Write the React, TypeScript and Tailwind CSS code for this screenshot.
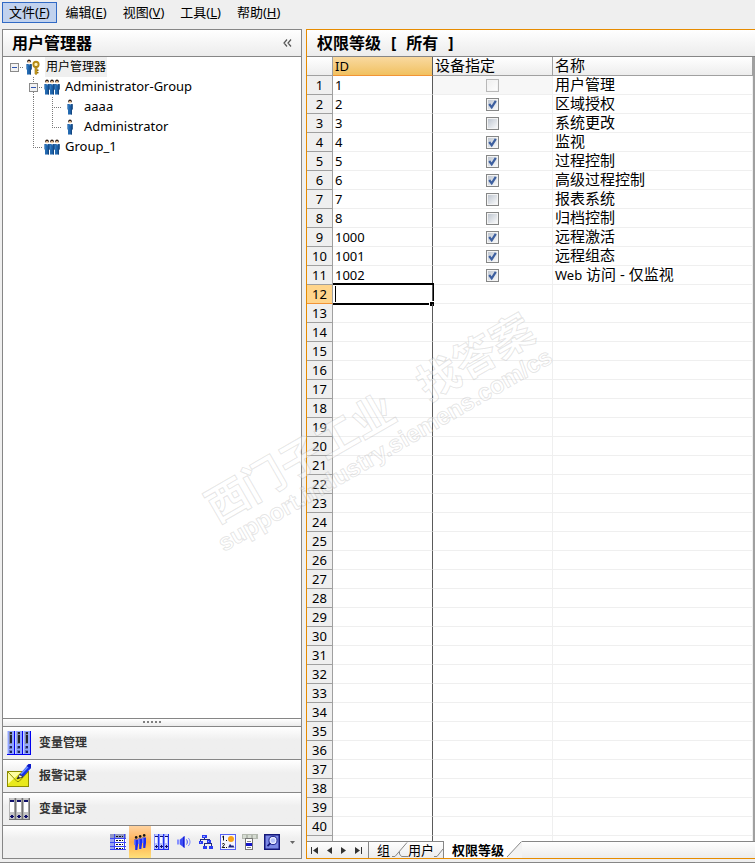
import React, { useState } from 'react';

type GuideKind = 'expander' | 'line' | 'tee' | 'elbow' | 'blank';
type TreeIconKind = 'root' | 'group' | 'user';

interface TreeRow {
  label: string;
  icon: TreeIconKind;
  guides: GuideKind[];
  cjk?: boolean;
}

interface Level {
  id: string;
  device: boolean;
  name: string;
  disabled?: boolean;
}

const menus = [
  { label: '文件', key: 'F' },
  { label: '编辑', key: 'E' },
  { label: '视图', key: 'V' },
  { label: '工具', key: 'L' },
  { label: '帮助', key: 'H' },
];

const treeRows: TreeRow[] = [
  { label: '用户管理器', icon: 'root', guides: ['expander'], cjk: true },
  { label: 'Administrator-Group', icon: 'group', guides: ['blank', 'expander'] },
  { label: 'aaaa', icon: 'user', guides: ['blank', 'line', 'tee'] },
  { label: 'Administrator', icon: 'user', guides: ['blank', 'line', 'elbow'] },
  { label: 'Group_1', icon: 'group', guides: ['blank', 'elbow'] },
];

const initialLevels: Level[] = [
  { id: '1', device: false, name: '用户管理', disabled: true },
  { id: '2', device: true, name: '区域授权' },
  { id: '3', device: false, name: '系统更改' },
  { id: '4', device: true, name: '监视' },
  { id: '5', device: true, name: '过程控制' },
  { id: '6', device: true, name: '高级过程控制' },
  { id: '7', device: false, name: '报表系统' },
  { id: '8', device: false, name: '归档控制' },
  { id: '1000', device: true, name: '远程激活' },
  { id: '1001', device: true, name: '远程组态' },
  { id: '1002', device: true, name: 'Web 访问 - 仅监视' },
];

const ROW_COUNT = 41;

/* ---------- tree ---------- */

const Guide: React.FC<{ kind: GuideKind; nested: boolean }> = ({ kind, nested }) => (
  <svg width="19" height="20" viewBox="0 0 19 20" shapeRendering="crispEdges" className="shrink-0">
    <g stroke="#7a7a7a" strokeDasharray="1 1" fill="none">
      {kind === 'line' && <path d="M9.5 0V20" />}
      {kind === 'tee' && <path d="M9.5 0V20M9 10.5H19" />}
      {kind === 'elbow' && <path d="M9.5 0V10M9 10.5H19" />}
      {kind === 'expander' && <path d={nested ? 'M9.5 0V6M9.5 15V20M15 10.5H19' : 'M15 10.5H19'} />}
    </g>
    {kind === 'expander' && (
      <g>
        <rect x="5.5" y="6.5" width="8" height="8" fill="#f2f2f2" stroke="#8a8a8a" />
        <path d="M7 10.5H12" stroke="#2f55b0" />
      </g>
    )}
  </svg>
);

const Person: React.FC<{ x: number }> = ({ x }) => (
  <g transform={`translate(${x} 0)`}>
    <circle cx="3" cy="2.2" r="1.8" fill="#2a1a12" />
    <path d="M1.8 2.2H4.2V4.2H1.8Z" fill="#f5cfa8" />
    <path d="M.4 5H5.6V10.5H5V15.6H1V10.5H.4Z" fill="#1b5da3" />
    <path d="M1 5.4H2.4V15H1.4V10H1Z" fill="#2f78bf" />
    <path d="M4.6 5.2H5.6V10.5H5V15.6H4.2Z" fill="#123f73" />
    <path d="M2.4 4.2H3.8L3.1 6.4Z" fill="#fff" />
  </g>
);

const TreeIcon: React.FC<{ kind: TreeIconKind }> = ({ kind }) => (
  <svg width="18" height="16" viewBox="0 0 18 16" className="shrink-0">
    {kind === 'group' && (
      <>
        <Person x={1} />
        <Person x={6} />
        <Person x={11} />
      </>
    )}
    {kind === 'user' && <Person x={5} />}
    {kind === 'root' && (
      <>
        <Person x={2} />
        <circle cx="12" cy="5.4" r="2.6" fill="#fff3bd" stroke="#b58a14" strokeWidth="1.9" />
        <path d="M11 8H13V14.6L12 15.8L11 14.6Z" fill="#d3a824" stroke="#8d6a0c" strokeWidth=".6" />
        <path d="M13 10.5H14.5V12H13ZM13 13H14.5V14.2H13Z" fill="#8d6a0c" />
      </>
    )}
  </svg>
);

const TreeView: React.FC = () => (
  <ul role="tree" className="flex-1 min-h-0 overflow-hidden bg-white pl-0.5">
    {treeRows.map((row) => (
      <li key={row.label} role="treeitem" className="flex h-5 items-center">
        {row.guides.map((kind, i) =>
          kind === 'blank' ? (
            <span key={i} className="w-[19px]" />
          ) : (
            <Guide key={i} kind={kind} nested={i > 0} />
          )
        )}
        <TreeIcon kind={row.icon} />
        <span
          className={
            row.cjk
              ? 'ml-[3px] h-5 bg-[#efefef] px-px text-[12px] leading-5'
              : 'ml-1 pb-0.5 text-[13px] leading-[18px]'
          }
        >
          {row.label}
        </span>
      </li>
    ))}
  </ul>
);

/* ---------- navigation bars ---------- */

const TagsIcon: React.FC = () => (
  <svg width="24" height="24" viewBox="0 0 24 24" shapeRendering="crispEdges">
    <rect width="24" height="24" fill="#92a6ff" />
    {[0, 8, 16].map((x) => (
      <g key={x} transform={`translate(${x} 0)`}>
        <path d="M0 0H1V23H0Z" fill="#c5d0ff" />
        <path d="M7 0H8V24H7Z" fill="#0000f0" />
        <path d="M2 1H5V13H2Z" fill="#8288a4" />
        <path d="M3 1H5V3H3ZM3 4H5V12H3Z" fill="#22252c" />
        <path d="M2 15H5V18H2ZM2 19H5V22H2Z" fill="#6672b8" />
        <path d="M3 15H5V17H3ZM3 20H5V22H3Z" fill="#1d245c" />
      </g>
    ))}
    <path d="M0 23H24V24H0Z" fill="#0000f0" />
  </svg>
);

const AlarmIcon: React.FC = () => (
  <svg width="24" height="24" viewBox="0 0 24 24">
    <rect x=".5" y="7.5" width="21" height="15" fill="#e9e91c" stroke="#8c8c00" />
    <path d="M1 8H14L1 20Z" fill="#ffffa0" />
    <path d="M1 8L10 17.5H12L21 8" fill="none" stroke="#8c8c00" />
    <path d="M12.5 10.5L20 2L24 4L16 13Z" fill="#1630e8" />
    <path d="M14 10L21 2.8" stroke="#6f96ff" strokeWidth="1.5" />
    <path d="M19.5 2L21.5 0H24V3.5L23.5 4.5Z" fill="#0a18c8" />
    <path d="M12.5 10.5L16 13L10 14.8Z" fill="#f1f1f1" stroke="#222" strokeWidth=".8" />
    <path d="M10 14.8L12 12.6L12.8 14Z" fill="#111" />
  </svg>
);

const BindersIcon: React.FC = () => (
  <svg width="24" height="24" viewBox="0 0 24 24" shapeRendering="crispEdges">
    {[2, 9, 16].map((x) => (
      <g key={x} transform={`translate(${x} 0)`}>
        <path d="M0 1H7V23H0Z" fill="#c6c6c6" />
        <path d="M1 5H5V15H1Z" fill="#fff" />
        <path d="M0 1H1V23H0Z" fill="#b4b4b4" />
        <path d="M5 1H6V23H5Z" fill="#a2a2a2" />
        <path d="M6 1H7V23H6ZM0 22H7V23H0Z" fill="#747474" />
        <path d="M1 3H5V5H1Z" fill="#10106a" />
        <path d="M2 18H4V21H2ZM1 19H5V20H1Z" fill="#10106a" />
      </g>
    ))}
  </svg>
);

const navItems = [
  { label: '变量管理', icon: <TagsIcon /> },
  { label: '报警记录', icon: <AlarmIcon /> },
  { label: '变量记录', icon: <BindersIcon /> },
];

const TableIcon: React.FC = () => (
  <svg width="16" height="16" viewBox="0 0 16 16" shapeRendering="crispEdges">
    <path d="M0 0H16V4H0Z" fill="#9298c4" />
    <path d="M0 4H5V16H0Z" fill="#9aa5f0" />
    <path d="M5 4H16V16H5Z" fill="#fff" />
    <path d="M0 4.5H16M0 8.5H16M0 12.5H16M0 15.5H16M4.5 0V16M14.5 0V16" stroke="#3a46f5" fill="none" />
    <path d="M6 2.5H13M6 6.5H13M6 10.5H13M6 14.5H13" stroke="#111" strokeDasharray="2 1" />
  </svg>
);

const CrowdIcon: React.FC = () => (
  <svg width="16" height="18" viewBox="0 0 16 18">
    {[
      [2, 3],
      [6, 2],
      [10, 1],
    ].map(([x, y]) => (
      <g key={x} transform={`translate(${x} ${y})`}>
        <circle cx="2.2" cy="1.4" r="1.3" fill="#151515" />
        <path d="M.2 3.6H4V9L3.3 14H1.2V9H.2Z" fill="#1c2cf5" />
        <path d="M.4 4H1.4V9H.4Z" fill="#8d9cff" />
      </g>
    ))}
  </svg>
);

const SmallBindersIcon: React.FC = () => (
  <svg width="16" height="16" viewBox="0 0 16 16" shapeRendering="crispEdges">
    {[0, 5, 10].map((x) => (
      <g key={x} transform={`translate(${x} 0)`}>
        <path d="M0 0H5V15H0Z" fill="#b9c2ff" />
        <path d="M1 3H3V9H1Z" fill="#f4f6ff" />
        <path d="M0 0H1V15H0Z" fill="#8490ff" />
        <path d="M4 0H5V16H4ZM0 15H5V16H0Z" fill="#2030f0" />
        <path d="M1 2H4V3H1ZM2 11H3V14H2ZM1 12H4V13H1Z" fill="#10106a" />
      </g>
    ))}
  </svg>
);

const SpeakerIcon: React.FC = () => (
  <svg width="16" height="16" viewBox="0 0 16 16" fill="none">
    <path d="M1 5.5H3.5V10.5H1Z" fill="#8791ff" />
    <path d="M4 5.5L8.5 2V14L4 10.5Z" fill="#3f4ff5" />
    <path d="M7 3.2L8.5 2V14L7 12.8Z" fill="#1822d8" />
    <path d="M10.5 5.5C11.6 7 11.6 9 10.5 10.5" stroke="#3b4cf5" />
    <path d="M12.2 4C14.6 6.2 14.6 9.8 12.2 12" stroke="#7a88ff" />
  </svg>
);

const StructureIcon: React.FC = () => (
  <svg width="16" height="16" viewBox="0 0 16 16" shapeRendering="crispEdges">
    <path d="M6.5 3V6M2.5 8V5.5H11.5V8M6.5 12V9.5H13.5V12" stroke="#222a7a" fill="none" />
    <path d="M4 1H9V4H4ZM1 7H5V10H1ZM9 6H13V9H9ZM5 12H9V15H5ZM11 12H15V15H11Z" fill="#2a3bf2" />
    <path d="M5 2H7V3H5ZM2 8H3V9H2ZM10 7H11V8H10Z" fill="#9aa8ff" />
  </svg>
);

const TextLibraryIcon: React.FC = () => (
  <svg width="16" height="16" viewBox="0 0 16 16">
    <rect x=".5" y=".5" width="15" height="15" fill="#f4f5ff" stroke="#5563f5" />
    <path d="M3.5 2V6.5M2.2 3.2L3.5 2M2.2 10Q4.5 8.6 4.5 10.5L2.2 13.5H5" stroke="#111" fill="none" />
    <path d="M6 6H7V7H6ZM6 13H7V14H6Z" fill="#111" />
    <circle cx="11" cy="5" r="3" fill="#f6a21a" />
    <path d="M8 13.5L10 10L12 12L13 11L14.5 13.5Z" fill="#1b2380" />
  </svg>
);

const ReportIcon: React.FC = () => (
  <svg width="16" height="16" viewBox="0 0 16 16" shapeRendering="crispEdges">
    <path d="M0 0H16V5H0Z" fill="#b4bab0" />
    <path d="M1 1H4V4H1ZM6 1H9V4H6ZM11 1H14V4H11Z" fill="#d6dcd2" />
    <path d="M3.5 4.5H10.5V15.5H3.5Z" fill="#fff" stroke="#777" />
    <path d="M5 7.5H9M5 13.5H9" stroke="#888" />
    <path d="M4 9H10V12H4Z" fill="#1414c8" />
  </svg>
);

const PictureIcon: React.FC = () => (
  <svg width="16" height="16" viewBox="0 0 16 16">
    <rect x=".75" y=".75" width="14.5" height="14.5" fill="#7c89e6" stroke="#14187a" strokeWidth="1.5" />
    <circle cx="9" cy="6.5" r="3" fill="#b8c4fa" stroke="#e8ecff" strokeWidth="1.3" />
    <circle cx="9" cy="6.5" r="4.1" fill="none" stroke="#1a1f86" strokeWidth=".9" />
    <path d="M6.4 9.2L3.5 12.2" stroke="#14187a" strokeWidth="1.7" />
  </svg>
);

const tools = [
  { label: '变量管理', icon: <TableIcon /> },
  { label: '用户管理器', icon: <CrowdIcon />, active: true },
  { label: '变量记录', icon: <SmallBindersIcon /> },
  { label: '报警', icon: <SpeakerIcon /> },
  { label: '结构', icon: <StructureIcon /> },
  { label: '文本库', icon: <TextLibraryIcon /> },
  { label: '报表', icon: <ReportIcon /> },
  { label: '画面', icon: <PictureIcon /> },
];

const Sidebar: React.FC = () => (
  <aside className="flex w-[300px] shrink-0 flex-col border border-[#868686]">
    <header className="flex h-[27px] shrink-0 items-center justify-between border-b border-[#868686] bg-gradient-to-b from-white to-[#ececec] pr-2 pl-[9px]">
      <h2 className="text-[16px] leading-5 font-bold">用户管理器</h2>
      <button aria-label="折叠" className="p-px">
        <svg width="9" height="8" viewBox="0 0 9 8" fill="none" stroke="#555" strokeWidth="1.2">
          <path d="M4 .5L1 4L4 7.5M8 .5L5 4L8 7.5" />
        </svg>
      </button>
    </header>

    <TreeView />

    <div className="flex h-[9px] shrink-0 items-start justify-center gap-0.5 border-y border-[#868686] bg-gradient-to-b from-white to-[#ececec] pt-0.5">
      {[0, 1, 2, 3, 4].map((i) => (
        <span key={i} className="size-0.5 bg-[#808080]" />
      ))}
    </div>

    <nav className="shrink-0">
      {navItems.map((item) => (
        <button
          key={item.label}
          className="flex h-[33px] w-full items-center gap-2 border-b border-[#868686] bg-gradient-to-b from-white via-[#efefef] via-40% to-[#efefef] pl-1 text-[12px] font-bold text-[#333]"
        >
          {item.icon}
          <span>{item.label}</span>
        </button>
      ))}
    </nav>

    <div className="flex h-8 shrink-0 justify-end bg-gradient-to-b from-white via-[#efefef] via-40% to-[#efefef]">
      {tools.map((tool) => (
        <button
          key={tool.label}
          aria-label={tool.label}
          className={`flex w-[22px] items-center justify-center ${
            tool.active ? 'bg-gradient-to-b from-[#ffd3a0] via-[#ffad4a] via-50% to-[#ffe07a]' : ''
          }`}
        >
          {tool.icon}
        </button>
      ))}
      <button aria-label="更多" className="flex w-[18px] items-center justify-center">
        <svg width="5" height="3" viewBox="0 0 5 3">
          <path d="M0 0H5L2.5 3Z" fill="#666" />
        </svg>
      </button>
    </div>
  </aside>
);

/* ---------- grid ---------- */

const Check: React.FC<{ row: Level; onChange: () => void }> = ({ row, onChange }) => (
  <span className="relative mx-auto block size-[13px]">
    <input
      type="checkbox"
      aria-label={`设备指定 ${row.id}`}
      checked={row.device}
      disabled={row.disabled}
      onChange={onChange}
      className="peer block size-[13px] appearance-none border border-[#868787] bg-gradient-to-br from-[#b9c1cc] to-white shadow-[inset_0_0_0_1px_#f4f4f4] disabled:border-[#b8b8b8] disabled:from-[#eee]"
    />
    <svg
      width="13"
      height="13"
      viewBox="0 0 13 13"
      fill="none"
      className="pointer-events-none absolute inset-0 opacity-0 peer-checked:opacity-100"
    >
      <path d="M3.2 6L5.7 9.4L9.8 2.8" stroke="#3d5f9f" strokeWidth="2.2" />
    </svg>
  </span>
);

const SelectedCell: React.FC = () => (
  <>
    <input
      type="text"
      aria-label="ID 12"
      className="block h-[18px] w-full bg-transparent pl-0.5 text-[13px] outline-none"
    />
    <span className="pointer-events-none absolute -top-0.5 -right-0.5 -bottom-0.5 left-0 border-y-2 border-r border-black">
      <span className="absolute top-px left-0.5 h-4 w-px bg-black" />
      <span className="absolute -right-px -bottom-[3px] size-[5px] border-t border-l border-white bg-black" />
    </span>
  </>
);

const LevelGrid: React.FC = () => {
  const [levels, setLevels] = useState(initialLevels);
  const selected = 12;

  const toggle = (index: number) => {
    setLevels((prev) => prev.map((l, i) => (i === index ? { ...l, device: !l.device } : l)));
  };

  return (
    <div className="flex min-h-0 flex-1 bg-white">
      <div className="min-w-0 flex-1">
        <table className="w-full table-fixed border-separate border-spacing-0 text-[13px] leading-[18px]">
          <colgroup>
            <col className="w-[26px]" />
            <col className="w-[100px]" />
            <col className="w-[120px]" />
            <col />
          </colgroup>
          <thead>
            <tr className="h-[19px] bg-gradient-to-b from-white to-[#ececec] text-left">
              <th className="border-r border-b border-[#a0a0a0] p-0" />
              <th className="border-r border-b border-r-[#5a5a5a] border-b-[#f29436] bg-gradient-to-b from-[#f9d99f] to-[#f1c15f] p-0 pl-0.5 font-normal">
                ID
              </th>
              <th className="border-r border-b border-[#a0a0a0] p-0 pb-0.5 pl-0.5 text-[15px] leading-4 font-normal">
                设备指定
              </th>
              <th className="border-r border-b border-[#a0a0a0] p-0 pb-0.5 pl-0.5 text-[15px] leading-4 font-normal">
                名称
              </th>
            </tr>
          </thead>
          <tbody>
            {Array.from({ length: ROW_COUNT }, (_, i) => {
              const row = levels[i];
              const isSelected = i + 1 === selected;
              return (
                <tr key={i} className="h-[19px]">
                  <th
                    className={`border-r border-b p-0 text-center font-normal ${
                      isSelected
                        ? 'border-r-[#a0a0a0] border-b-[#f29436] bg-[#ffd58c]'
                        : 'border-[#a0a0a0] bg-[#efefef]'
                    }`}
                  >
                    {i < 40 ? i + 1 : ''}
                  </th>
                  <td className="relative border-r border-b border-r-[#5a5a5a] border-b-[#efefef] p-0">
                    {isSelected ? <SelectedCell /> : <span className="block pl-0.5">{row?.id}</span>}
                  </td>
                  <td className={`border-r border-b border-[#efefef] p-0 ${row?.disabled ? 'bg-[#f7f7f7]' : ''}`}>
                    {row && <Check row={row} onChange={() => toggle(i)} />}
                  </td>
                  <td className="border-r border-b border-[#efefef] p-0 pb-0.5 pl-0.5 text-[15px] leading-4">
                    {row &&
                      (row.name.startsWith('Web') ? (
                        <>
                          <span className="text-[13px] leading-none">Web</span>
                          {row.name.slice(3)}
                        </>
                      ) : (
                        row.name
                      ))}
                  </td>
                </tr>
              );
            })}
          </tbody>
        </table>
      </div>
      <div className="w-0.5 shrink-0 bg-[#a0a0a0]" />
    </div>
  );
};

/* Sits above the grid so that the last, partly visible row runs under it */
const SheetTabs: React.FC = () => (
  <footer className="relative z-10 flex h-[17px] shrink-0 bg-gradient-to-b from-white to-[#ececec] text-[13px] leading-4">
    <div className="flex w-[62px] items-center justify-around border-t border-r border-[#868686] pr-0.5">
      {[
        { label: '第一个', d: 'M0 0H1V7H0ZM7 0V7L2 3.5Z' },
        { label: '上一个', d: 'M6 0V7L1 3.5Z' },
        { label: '下一个', d: 'M1 0V7L6 3.5Z' },
        { label: '最后一个', d: 'M0 0V7L5 3.5ZM6 0H7V7H6Z' },
      ].map((b) => (
        <button key={b.label} aria-label={b.label}>
          <svg width="7" height="7" viewBox="0 0 7 7" fill="#333">
            <path d={b.d} />
          </svg>
        </button>
      ))}
    </div>
    <button className="flex border-t border-[#868686] pl-2">
      <span>组</span>
      <svg width="18" height="16" viewBox="0 0 18 16" fill="none" stroke="#868686">
        <path d="M2 14.5H5L17 .5M9.5 9.5V12L11.5 14.5H18" />
      </svg>
    </button>
    <button className="flex border-t border-[#868686]">
      <span>用户</span>
      <svg width="9" height="16" viewBox="0 0 9 16" fill="none" stroke="#868686">
        <path d="M0 14.5H3L9 7" />
      </svg>
    </button>
    <button className="flex border-l border-[#868686] bg-white pl-2 font-bold">
      <span className="pt-px">权限等级</span>
      <svg width="18" height="17" viewBox="0 0 18 17" fill="none">
        <path d="M3 16L18 .5V17H3Z" fill="#f3f3f3" />
        <path d="M3 16L17.5 .5" stroke="#868686" />
      </svg>
    </button>
    <div className="flex-1 border-t border-[#868686]" />
  </footer>
);

/* Faint diagonal stamp laid over both panels */
const Watermark: React.FC = () => (
  <svg
    width="400"
    height="280"
    viewBox="0 0 400 280"
    aria-hidden="true"
    className="pointer-events-none absolute top-[290px] left-[190px]"
  >
    <g
      transform="translate(34 262) rotate(-30)"
      fill="#ffffff"
      fillOpacity=".4"
      stroke="#8a8a8a"
      strokeOpacity=".22"
      strokeWidth="1"
      fontWeight="700"
    >
      <text x="8" y="-28" fontSize="42">西门子工业</text>
      <text x="252" y="-28" fontSize="42">找答案</text>
      <text x="0" y="0" fontSize="24" className="font-['Liberation_Sans',sans-serif]">
        support.industry.siemens.com/cs
      </text>
    </g>
  </svg>
);

const App: React.FC = () => {
  return (
    <div className="relative flex h-screen flex-col overflow-hidden bg-[#efefef] font-['Noto_Sans','Noto_Sans_CJK_SC',sans-serif] text-black">
      <nav className="flex h-[29px] shrink-0 items-start gap-0.5 pt-0.5 pl-0.5 text-[13px]">
        {menus.map((m, i) => (
          <button
            key={m.key}
            className={`h-[21px] border px-1.5 leading-[19px] whitespace-nowrap ${
              i === 0 ? 'border-[#316ac5] bg-[#c1d2ee]' : 'border-transparent'
            }`}
          >
            {m.label}(<span className="underline">{m.key}</span>)
          </button>
        ))}
      </nav>

      <div className="flex min-h-0 flex-1 gap-1 pl-0.5">
        <Sidebar />
        <main className="flex min-w-0 flex-1 flex-col border-y border-l border-[#e68b00]">
          <header className="flex h-[27px] shrink-0 items-center border-b border-[#868686] bg-gradient-to-b from-white to-[#ececec] pl-2.5">
            <h1 className="flex gap-2.5 text-[16px] leading-5 font-bold">
              <span>权限等级</span>
              <span>[</span>
              <span>所有</span>
              <span>]</span>
            </h1>
          </header>
          <LevelGrid />
          <SheetTabs />
        </main>
      </div>
      <div className="relative z-10 h-1 shrink-0 border-b border-[#868686] bg-[#efefef]" />

      <Watermark />
    </div>
  );
};

export default App;
